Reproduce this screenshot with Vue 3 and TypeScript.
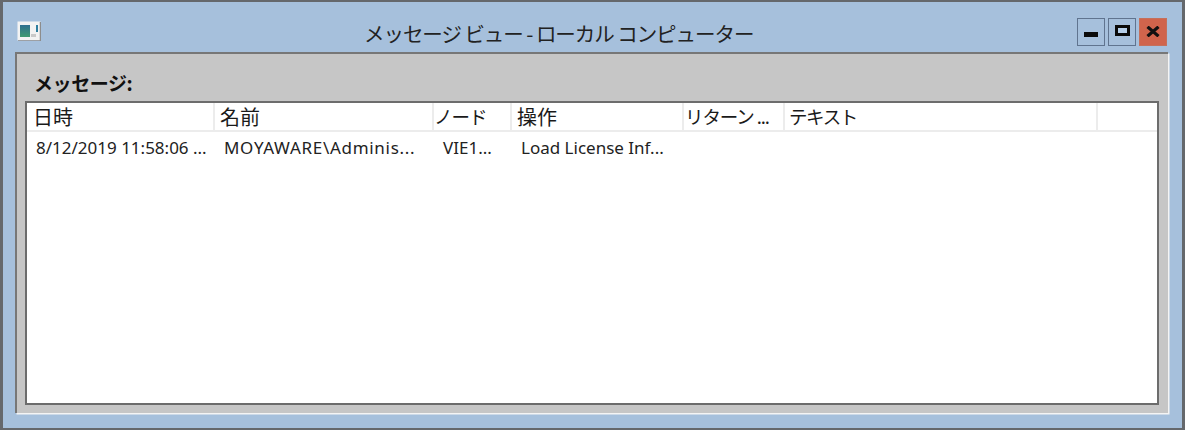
<script setup lang="ts">
interface Col { label: string; value: string; width: number; headPad: number; headSize: number; headTrack: number; track: number }
const cols: Col[] = [
  { label: '日時', value: '8/12/2019 11:58:06 ...', width: 188, headPad: 6, headSize: 20, headTrack: 0, track: 0 },
  { label: '名前', value: 'MOYAWARE\\Adminis...', width: 219, headPad: 5, headSize: 20, headTrack: 0, track: 0.7 },
  { label: 'ノード', value: 'VIE1...', width: 78, headPad: 0, headSize: 18.5, headTrack: -1, track: 0 },
  { label: '操作', value: 'Load License Inf...', width: 172, headPad: 5, headSize: 20, headTrack: 0, track: 0 },
  { label: 'リターン ...', value: '', width: 101, headPad: 1, headSize: 18.5, headTrack: -1.1, track: 0 },
  { label: 'テキスト', value: '', width: 313, headPad: 4, headSize: 18.5, headTrack: -1.4, track: 0 },
]
</script>

<template>
  <div class="window">
    <header class="titlebar">
      <svg class="app-icon" width="24" height="20" viewBox="0 0 24 20">
        <defs>
          <linearGradient id="ico" x1="0" y1="0" x2="0" y2="1">
            <stop offset="0" stop-color="#2f6f8f" />
            <stop offset="1" stop-color="#3f9a70" />
          </linearGradient>
        </defs>
        <rect x="0.5" y="0.5" width="23" height="19" fill="#f3f3f3" />
        <path d="M23.5 1V20H1" fill="none" stroke="#8d8d8d" stroke-width="1.5" />
        <rect x="3" y="4" width="10" height="12" fill="url(#ico)" />
        <rect x="14" y="13" width="5" height="3" fill="#c9c9c9" />
        <rect x="19" y="4" width="2" height="7" fill="#2f7fa0" />
      </svg>
      <h1 class="title">メッセージ ビュー - ローカル コンピューター</h1>
      <div class="controls">
        <button class="ctl"><span class="min"></span></button>
        <button class="ctl"><span class="max"></span></button>
        <button class="ctl close">
          <svg class="x" width="14" height="11" viewBox="0 0 14 11"><path d="M1.5 0.8L12.5 10.2M12.5 0.8L1.5 10.2" stroke="#111" stroke-width="3.2" fill="none" /></svg>
        </button>
      </div>
    </header>
    <main class="client">
      <div class="label">メッセージ:</div>
      <section class="list">
        <div class="row head">
          <div
            v-for="c in cols"
            :key="c.label"
            class="hcell"
            :style="{ width: c.width + 'px', paddingLeft: c.headPad + 'px', fontSize: c.headSize + 'px', letterSpacing: c.headTrack + 'px' }"
          >{{ c.label }}</div>
          <div class="hcell fill"></div>
        </div>
        <div class="row data">
          <div
            v-for="c in cols"
            :key="c.label"
            class="cell"
            :style="{ width: c.width + 'px', letterSpacing: c.track + 'px' }"
          >{{ c.value }}</div>
        </div>
      </section>
    </main>
  </div>
</template>

<style>
html, body { margin: 0; background: #5c5f63; }
</style>

<style scoped>
.window {
  box-sizing: border-box;
  width: 1185px;
  height: 430px;
  background: #a6c0dc;
  border: 2px solid #65686c;
  border-left-width: 3px;
  border-right-width: 3px;
  padding: 0 14px 15px 12px;
  display: flex;
  flex-direction: column;
  font-family: "Noto Sans CJK JP", "Liberation Sans", sans-serif;
  color: #111;
}
.titlebar {
  height: 50px;
  flex: none;
  display: flex;
  align-items: flex-start;
  position: relative;
}
.app-icon { margin: 19px 0 0 2px; }
.title {
  position: absolute;
  left: 349px;
  top: 15px;
  margin: 0;
  font-size: 20.5px;
  letter-spacing: -1.05px;
  line-height: 32px;
  font-weight: 400;
  white-space: nowrap;
  color: #222;
}
.controls {
  margin-left: auto;
  margin-top: 16px;
  margin-right: 1px;
  display: flex;
  gap: 3px;
}
.ctl {
  box-sizing: border-box;
  width: 28px;
  height: 28px;
  padding: 0;
  background: #a6c0dc;
  border: 1.5px solid #60748f;
  display: flex;
  align-items: center;
  justify-content: center;
}
.min { width: 14px; height: 5px; background: #0a0a0a; margin-top: 5px; }
.max { box-sizing: border-box; width: 15px; height: 11px; border: 3px solid #0a0a0a; background: #b7d0ea; margin-top: -3px; }
.x { margin-top: -1px; }
.close { background: #d0644c; border-color: #c5705b; }
.client {
  flex: 1;
  background: #c6c6c6;
  border-top: 2px solid #777;
  border-left: 2px solid #777;
  box-shadow: 1.5px 1.5px 0 #f4f4f4;
  padding: 14px 9px 8px 8px;
  display: flex;
  flex-direction: column;
}
.label {
  font-size: 19px;
  line-height: 30px;
  height: 33px;
  font-weight: 700;
  padding-left: 9px;
  letter-spacing: -0.4px;
  color: #111;
}
.list {
  flex: 1;
  background: #fff;
  border: 2px solid #6c6c6c;
}
.row { display: flex; }
.head {
  box-sizing: border-box;
  height: 29px;
  border-bottom: 2px solid #ececec;
  background: #fff;
}
.hcell {
  box-sizing: border-box;
  flex: none;
  border-right: 2px solid #ececec;
  line-height: 27px;
  height: 27px;
  white-space: nowrap;
  color: #1a1a1a;
}
.hcell.fill { flex: 1; border-right: 0; }
.data { height: 32px; }
.cell {
  box-sizing: border-box;
  flex: none;
  padding-left: 9px;
  font-family: "Noto Sans", "Liberation Sans", sans-serif;
  font-size: 17px;
  line-height: 32px;
  white-space: nowrap;
  overflow: hidden;
  color: #222;
}
</style>
